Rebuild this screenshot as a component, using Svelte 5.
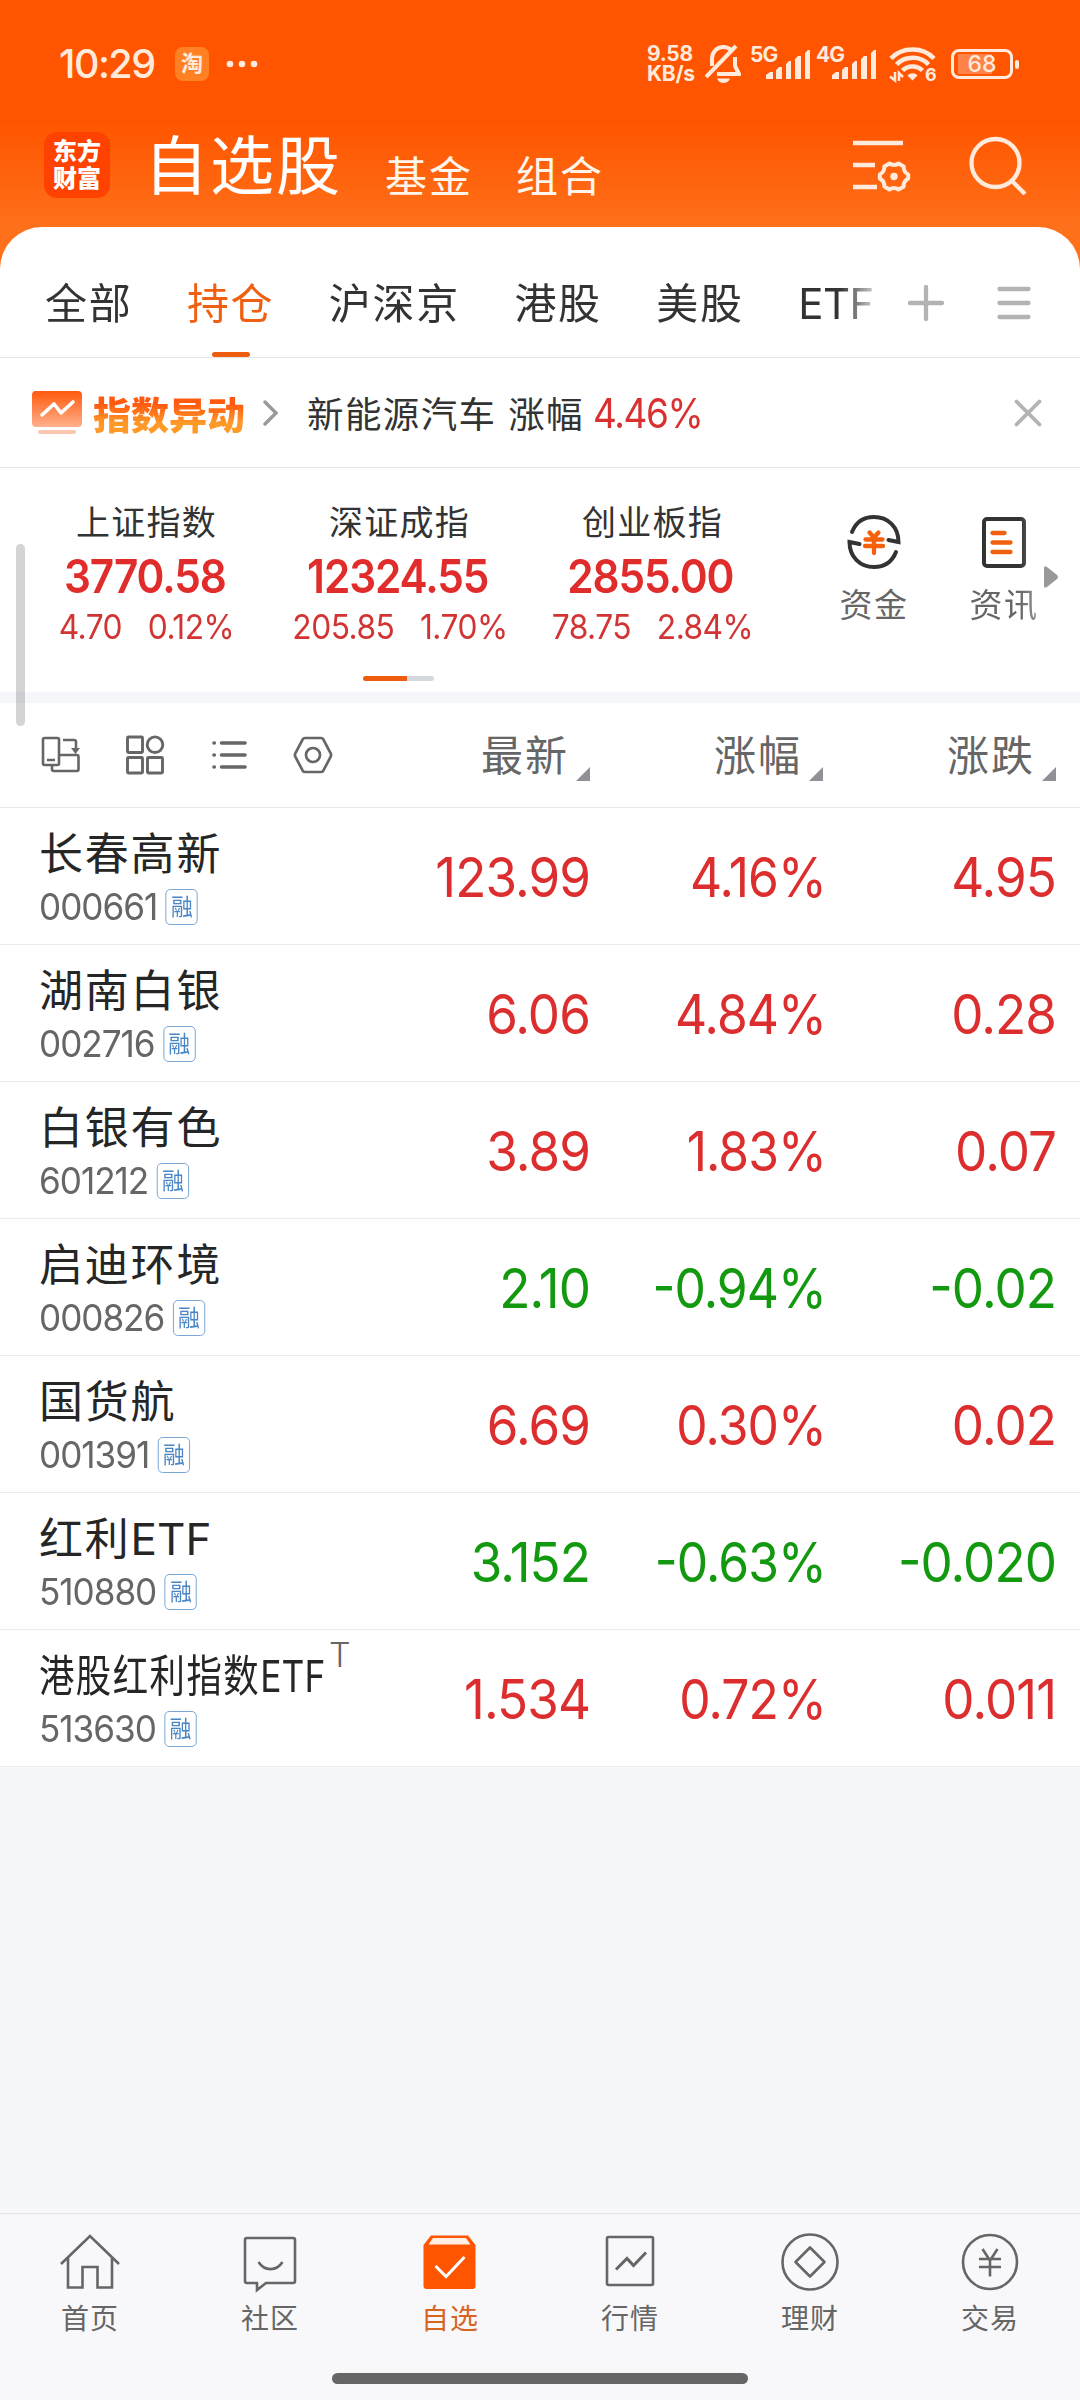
<script lang="ts">
	type Index = { name: string; value: string; change: string; pct: string };
	type Stock = {
		name: string;
		suffix?: string;
		code: string;
		last: string;
		pct: string;
		diff: string;
		down?: boolean;
		long?: boolean;
	};

	const tabs = ['全部', '持仓', '沪深京', '港股', '美股', 'ETF'];
	let activeTab = $state('持仓');

	const indices: Index[] = [
		{ name: '上证指数', value: '3770.58', change: '4.70', pct: '0.12%' },
		{ name: '深证成指', value: '12324.55', change: '205.85', pct: '1.70%' },
		{ name: '创业板指', value: '2855.00', change: '78.75', pct: '2.84%' }
	];

	const columns = ['最新', '涨幅', '涨跌'];

	const stocks: Stock[] = [
		{ name: '长春高新', code: '000661', last: '123.99', pct: '4.16%', diff: '4.95' },
		{ name: '湖南白银', code: '002716', last: '6.06', pct: '4.84%', diff: '0.28' },
		{ name: '白银有色', code: '601212', last: '3.89', pct: '1.83%', diff: '0.07' },
		{ name: '启迪环境', code: '000826', last: '2.10', pct: '-0.94%', diff: '-0.02', down: true },
		{ name: '国货航', code: '001391', last: '6.69', pct: '0.30%', diff: '0.02' },
		{ name: '红利', suffix: 'ETF', code: '510880', last: '3.152', pct: '-0.63%', diff: '-0.020', down: true },
		{ name: '港股红利指数', suffix: 'ETF', code: '513630', last: '1.534', pct: '0.72%', diff: '0.011', long: true }
	];

	const nav = ['首页', '社区', '自选', '行情', '理财', '交易'];
	let activeNav = $state('自选');
</script>

{#snippet signal(label: string)}
	<div class="signal">
		<span>{label}</span>
		<svg width="61" height="34" viewBox="0 0 61 34">
			<path
				d="M16 32v-4l4-3h3v7zM26 32v-9l3-3h3v12zM36 32v-15l3-3h2v18zM45 32v-20l3-3h3v23zM55 32v-26l3-3h2v29z"
				fill="currentColor"
			/>
		</svg>
	</div>
{/snippet}

<div class="app">
	<header>
		<div class="status">
			<span class="time">10:29</span>
			<span class="taobao">淘</span>
			<svg class="dots" width="32" height="8" viewBox="0 0 32 8" fill="currentColor">
				<circle cx="4" cy="4" r="3.3" />
				<circle cx="16" cy="4" r="3.3" />
				<circle cx="28" cy="4" r="3.3" />
			</svg>
			<div class="speed"><span>9.58</span><span>KB/s</span></div>
			<svg class="bell" width="36" height="40" viewBox="0 0 36 40" fill="none" stroke="currentColor" stroke-width="4">
				<path d="M7 22V15C7 8 12 3 18 3c3 0 6 1 8 3M30 13v9l4 8H12" />
				<path d="M1 33 31 2" />
				<path d="M12 34.500h13c-1 3-4 4.500-6.500 4.500s-5.500-1.500-6.500-4.500z" fill="currentColor" stroke="none" />
			</svg>
			{@render signal('5G')}
			{@render signal('4G')}
			<svg class="wifi" width="48" height="36" viewBox="0 0 48 36" fill="none" stroke="currentColor" stroke-width="4.500">
				<path d="M2 12.500c11-12 32-12 43 0" />
				<path d="M7.500 18.500c8.500-9 24-9 32 0" />
				<path d="M13.500 24.500c5-5.500 15-5.500 20 0" />
				<path d="M18.500 29.500c3-3 7.500-3 10 0l-5 5z" fill="currentColor" stroke="none" />
				<path d="M1 30.500l5 4V26M10 35v-8l4 4" stroke-width="2.500" />
				<text x="36" y="35" font-size="18" font-weight="700" fill="currentColor" stroke="none">6</text>
			</svg>
			<div class="battery"><span>68</span></div>
		</div>

		<div class="titlebar">
			<div class="logo"><span>东方</span><span>财富</span></div>
			<span class="title">自选股</span>
			<span class="sub">基金</span>
			<span class="sub">组合</span>
			<svg class="filter" width="58" height="54" viewBox="0 0 58 54" fill="none" stroke="currentColor" stroke-width="4.500">
				<path d="M0 5h50M0 27h22M0 49h24" />
				<path
					d="M36.500 25.500q4.500 3 9 0l5.200 3q-.4 5.400 4.500 8v4q-4.900 2.600-4.500 8l-5.200 3q-4.500-3-9 0l-5.200-3q.4-5.400-4.500-8v-4q4.900-2.600 4.500-8z"
					stroke-width="4"
					stroke-linejoin="round"
				/>
				<circle cx="41" cy="38.500" r="3.700" fill="currentColor" stroke="none" />
			</svg>
			<svg class="search" width="58" height="60" viewBox="0 0 58 60" fill="none" stroke="currentColor" stroke-width="4.300">
				<circle cx="26.500" cy="28" r="24" />
				<path d="M43 46l13 13" />
			</svg>
		</div>
	</header>

	<main>
		<nav class="tabs">
			<div class="tab-list">
				{#each tabs as tab}
					<button class="tab" class:active={tab === activeTab} onclick={() => (activeTab = tab)}>
						{tab}
					</button>
				{/each}
			</div>
			<svg class="add" width="36" height="36" viewBox="0 0 36 36" stroke="#b3b3b3" stroke-width="4.300" stroke-linecap="round">
				<path d="M18 2v32M2 18h32" />
			</svg>
			<svg class="menu" width="34" height="34" viewBox="0 0 34 34" stroke="#b3b3b3" stroke-width="4.300" stroke-linecap="round">
				<path d="M2.500 3h29M2.500 17h29M2.500 31h29" />
			</svg>
		</nav>

		<div class="notice">
			<svg width="50" height="44" viewBox="0 0 50 44">
				<defs>
					<linearGradient id="card" x1="0" y1="0" x2="0" y2="1">
						<stop offset="0" stop-color="#ff5a0c" />
						<stop offset="1" stop-color="#ffb08c" />
					</linearGradient>
				</defs>
				<rect width="50" height="36" rx="4" fill="url(#card)" />
				<path d="M10 24 22 13l7 9 12-11" fill="none" stroke="#fff" stroke-width="3.600" stroke-linecap="round" stroke-linejoin="round" />
				<rect x="6" y="39" width="38" height="4" rx="2" fill="#fbc7b0" />
			</svg>
			<span class="notice-title">指数异动</span>
			<svg class="chev" width="16" height="26" viewBox="0 0 16 26" fill="none" stroke="#999" stroke-width="3.400" stroke-linecap="round">
				<path d="M2 2l11 11L2 24" />
			</svg>
			<span class="notice-text">新能源汽车 涨幅</span>
			<span class="notice-pct">4.46%</span>
			<svg class="close" width="28" height="28" viewBox="0 0 28 28" stroke="#b3b3b3" stroke-width="3.800" stroke-linecap="round">
				<path d="M2.500 2.500l23 23M25.500 2.500l-23 23" />
			</svg>
		</div>

		<section class="indices">
			{#each indices as index}
				<div class="index">
					<span class="index-name">{index.name}</span>
					<span class="index-value">{index.value}</span>
					<span class="index-change"><span>{index.change}</span><span>{index.pct}</span></span>
				</div>
			{/each}
			<div class="shortcut">
				<svg width="56" height="56" viewBox="0 0 56 56" fill="none" stroke="#333" stroke-width="4">
					<path d="M6 18C10 8 18 3 28 3c14 0 24.500 10 24.500 25l-10-2" stroke-linecap="round" />
					<path d="M50 38C46 48 38 53 28 53 14 53 3.500 43 3.500 28l10 2" stroke-linecap="round" />
					<path d="M23.500 18.500 28 23.500l4.500-5M19.500 25.500h17M19 32h18M28 24v15" stroke="#f4600c" stroke-width="4.300" stroke-linecap="round" />
				</svg>
				<span>资金</span>
			</div>
			<div class="shortcut news">
				<svg width="56" height="56" viewBox="0 0 56 56" fill="none" stroke="#333" stroke-width="4">
					<rect x="8" y="5" width="40" height="47" rx="3" />
					<path d="M16.500 19h12M16.500 28.500h18M16.500 38h18" stroke="#f0600f" stroke-width="4.300" stroke-linecap="round" />
				</svg>
				<span>资讯</span>
			</div>
			<svg class="next" width="16" height="24" viewBox="0 0 16 24"><path d="M1 3q0-3 3-1l10 8q2 2 0 4l-10 8q-3 2-3-1z" fill="#999" /></svg>
			<div class="pager"></div>
			<div class="scroll-thumb"></div>
		</section>

		<div class="toolbar">
			<div class="tools">
				<svg width="40" height="40" viewBox="0 0 40 40" fill="none" stroke="#666" stroke-width="2.600">
					<rect x="2" y="3" width="16" height="27" rx="1.500" />
					<path d="M6 25h8M11 31v3q0 2 2 2h23q1.500 0 1.500-2V22q0-2-1.500-2H19M22 5h11q2 0 2 2v8" />
					<path d="M30 13h9l-4.500 6z" fill="#666" stroke="none" />
				</svg>
				<svg width="40" height="40" viewBox="0 0 40 40" fill="none" stroke="#666" stroke-width="2.900">
					<rect x="2.500" y="2" width="15" height="15.500" rx="1" />
					<circle cx="30" cy="9.700" r="7.800" />
					<rect x="2.500" y="22.500" width="15" height="15.500" rx="1" />
					<rect x="22.500" y="22.500" width="15" height="15.500" rx="1" />
				</svg>
				<svg width="40" height="40" viewBox="0 0 40 40" stroke="#666" stroke-width="3.600" stroke-linecap="round">
					<path d="M5 8h.3M12.500 8H36M5 20h.3M12.500 20H36M5 32h.3M12.500 32H36" />
				</svg>
				<svg width="40" height="40" viewBox="0 0 40 40" fill="none" stroke="#666" stroke-width="2.700">
					<path d="M12 3h16q1.500 0 2.300 1.300l7.400 14q.8 1.700 0 3.400l-7.400 14Q29.500 37 28 37H12q-1.500 0-2.300-1.300l-7.400-14q-.8-1.700 0-3.400l7.400-14Q10.500 3 12 3z" />
					<circle cx="20" cy="20" r="7" />
				</svg>
			</div>
			{#each columns as column}
				<div class="column">
					{column}
					<svg width="14" height="14" viewBox="0 0 14 14"><path d="M14 0v14H0z" fill="#909096" /></svg>
				</div>
			{/each}
		</div>

		<ul class="stocks">
			{#each stocks as stock}
				<li class:down={stock.down}>
					<div class="who">
						<div class="name">
							<span class:squeezed={stock.long}>
								{stock.name}{#if stock.suffix}<span class="suffix">{stock.suffix}</span>{/if}
							</span>
							{#if stock.long}<sup>T</sup>{/if}
						</div>
						<div class="code">{stock.code}<span class="tag">融</span></div>
					</div>
					<span class="num">{stock.last}</span>
					<span class="num pct">{stock.pct}</span>
					<span class="num">{stock.diff}</span>
				</li>
			{/each}
		</ul>
	</main>

	<footer>
		<div class="bottom-nav">
			{#each nav as item, i}
				<button class="nav-item" class:active={item === activeNav} onclick={() => (activeNav = item)}>
					<svg width="62" height="62" viewBox="0 0 62 62" fill="none" stroke="currentColor" stroke-width="2.600">
						{#if i === 0}
							<path d="M2 33 31 5l29 28M9 27v29.500h14.500V36h15v20.500H53V27" />
						{:else if i === 1}
							<path d="M8 7h46q2 0 2 2v41q0 2-2 2H27l-9 7v-7H8q-2 0-2-2V9q0-2 2-2zM19.500 31c6 9.500 18 9.500 24 0" />
						{:else if i === 2}
							<path d="M12 4.500h37l7.500 9.500v41q0 3-3 3H7.500q-3 0-3-3V14z" fill="currentColor" stroke="none" />
							<path d="M14 7h33l4.500 6.500h-42z" fill="#fff0e6" stroke="none" />
							<path d="M16.500 35 27 45.500 45.500 26" stroke="#fff" stroke-width="3" />
						{:else if i === 3}
							<rect x="8" y="6" width="46" height="48" rx="1.500" />
							<path d="M17 38.500 28 27.500l6.500 7L47 21.500" stroke-width="3" />
						{:else if i === 4}
							<circle cx="31" cy="31" r="27.500" />
							<path d="M31 16.500 45.500 31 31 45.500 16.500 31z" stroke-linejoin="round" />
						{:else}
							<circle cx="31" cy="31" r="27" />
							<path d="M23.500 18 31 29.500 38.500 18M20 28h22M20 36h22M31 28v17.500" />
						{/if}
					</svg>
					<span>{item}</span>
				</button>
			{/each}
		</div>
		<div class="home-bar"></div>
	</footer>
</div>

<style>
	:global(body) {
		background: #f6f7fa;
	}
	.app {
		display: flex;
		flex-direction: column;
		width: 1080px;
		height: 2400px;
		overflow: hidden;
		font-family: Inter, 'Noto Sans CJK SC', sans-serif;
		color: #333;
		background: linear-gradient(#f50 120px, #ff701a 227px, #ff701a 300px, #f6f7fa 300px);
	}
	svg {
		display: block;
		flex: none;
	}
	button {
		padding: 0;
		border: 0;
		background: none;
		font: inherit;
		color: inherit;
	}

	header {
		height: 227px;
		color: #ffeadc;
	}
	.status {
		display: flex;
		align-items: center;
		height: 128px;
		padding-left: 59px;
	}
	.time {
		width: 116px;
		font-size: 39.500px;
		font-weight: 500;
		letter-spacing: -1.500px;
	}
	.taobao {
		width: 34px;
		height: 34px;
		border-radius: 8px;
		background: #ff8123;
		font-size: 22px;
		font-weight: 700;
		line-height: 33px;
		text-align: center;
	}
	.dots {
		margin-left: 17px;
	}
	.speed {
		display: flex;
		flex-direction: column;
		width: 58px;
		margin-left: 389px;
		font-size: 21px;
		font-weight: 700;
		line-height: 20px;
		letter-spacing: -0.300px;
	}
	.bell {
		margin-right: 9px;
	}
	.signal {
		display: flex;
		width: 66px;
		height: 34px;
	}
	.signal span {
		width: 0;
		font-size: 21px;
		font-weight: 700;
		line-height: 15px;
		letter-spacing: -1px;
	}
	.wifi {
		margin-left: 7px;
		overflow: visible;
	}
	.battery {
		display: flex;
		justify-content: center;
		position: relative;
		width: 62px;
		height: 30px;
		box-sizing: border-box;
		margin-left: 14px;
		border: 3px solid;
		border-radius: 8px;
		background: linear-gradient(90deg, #ff8248 34px, transparent 34px) 4px 2px / 100% 20px no-repeat;
		font-size: 23px;
		font-weight: 500;
		line-height: 25px;
	}
	.battery::after {
		content: '';
		position: absolute;
		right: -9px;
		top: 8px;
		width: 4px;
		height: 9px;
		border-radius: 2px;
		background: currentColor;
	}

	.titlebar {
		display: flex;
		height: 99px;
		padding-left: 44px;
	}
	.logo {
		display: flex;
		flex-direction: column;
		justify-content: center;
		width: 66px;
		height: 66px;
		margin-top: 4px;
		border-radius: 13px;
		background: #ff4200;
		color: #fff;
		font-size: 24px;
		font-weight: 900;
		line-height: 27px;
		text-align: center;
	}
	.title {
		margin: 6px 0 0 34px;
		color: #fff;
		font-size: 64px;
		line-height: 64px;
		letter-spacing: 2px;
	}
	.sub {
		margin: 27px 0 0 43px;
		color: #fff5ea;
		font-size: 42px;
		line-height: 44px;
		letter-spacing: 2px;
	}
	.filter {
		margin: 10px 0 0 auto;
	}
	.search {
		margin: 7px 53px 0 58px;
	}

	main {
		display: flex;
		flex-direction: column;
		border-radius: 42px 42px 0 0;
		background: #fff;
	}
	.tabs {
		display: flex;
		align-items: center;
		height: 130px;
		border-bottom: 1px solid #e4e4e4;
	}
	.tab-list {
		display: flex;
		gap: 54.500px;
		width: 875px;
		height: 130px;
		padding-left: 45px;
		box-sizing: border-box;
		overflow: hidden;
		mask-image: linear-gradient(90deg, #000 840px, transparent 885px);
	}
	.tab {
		flex: none;
		display: flex;
		flex-direction: column;
		align-items: center;
		padding-top: 55px;
		font-size: 42px;
		line-height: 44px;
		letter-spacing: 1.700px;
	}
	.tab:last-child {
		letter-spacing: -0.500px;
	}
	.tab.active {
		color: #f06012;
	}
	.tab.active::after {
		content: '';
		width: 38px;
		height: 5px;
		margin-top: 26px;
		border-radius: 3px;
		background: #ee5c10;
	}
	.add {
		margin: 22px 0 0 33px;
	}
	.menu {
		margin: 22px 0 0 53px;
	}

	.notice {
		display: flex;
		align-items: center;
		height: 109px;
		padding-left: 32px;
		border-bottom: 1px solid #e4e4e4;
	}
	.notice-title {
		width: 169px;
		padding-left: 11px;
		box-sizing: border-box;
		background: linear-gradient(#ff5a10 35%, #ff9a28 70%);
		background-clip: text;
		color: transparent;
		font-size: 38px;
		font-weight: 900;
	}
	.chev {
		margin-left: 12px;
	}
	.notice-text {
		margin-left: 28px;
		font-size: 36.500px;
		letter-spacing: 1.400px;
		white-space: nowrap;
	}
	.notice-pct {
		margin-left: 9px;
		color: #d93030;
		font-size: 41px;
		letter-spacing: -1.500px;
		transform: scaleX(0.9);
		transform-origin: left;
	}
	.close {
		margin: 0 38px 0 auto;
	}

	.indices {
		display: flex;
		position: relative;
		height: 224px;
		padding-left: 20px;
		border-bottom: 11px solid #f6f7fa;
	}
	.index {
		display: flex;
		flex-direction: column;
		align-items: center;
		width: 253px;
		padding-top: 30px;
	}
	.index-name {
		font-size: 34px;
		line-height: 49px;
		letter-spacing: 1.300px;
	}
	.index-value {
		margin-right: 4px;
		color: #e12c2c;
		font-size: 47px;
		font-weight: 600;
		line-height: 57px;
		letter-spacing: -1.200px;
		transform: scaleX(0.9);
	}
	.index-change {
		display: flex;
		gap: 28px;
		color: #d23434;
		font-size: 34.500px;
		line-height: 46px;
		letter-spacing: -0.600px;
		transform: scaleX(0.92);
	}
	.shortcut {
		display: flex;
		flex-direction: column;
		align-items: center;
		gap: 11px;
		width: 130px;
		margin-left: 30px;
		padding-top: 46px;
		color: #666;
		font-size: 33px;
		line-height: 48px;
		letter-spacing: 1.500px;
	}
	.news {
		margin-left: 0;
		mask-image: linear-gradient(90deg, #000 80px, rgb(0 0 0 / 50%) 110px);
	}
	.next {
		position: absolute;
		left: 1043px;
		top: 97px;
	}
	.pager {
		position: absolute;
		left: 363px;
		top: 208px;
		width: 71px;
		height: 5px;
		border-radius: 3px;
		background: linear-gradient(90deg, #ee5c10 44px, #d5d8dc 44px);
	}
	.scroll-thumb {
		position: absolute;
		left: 16px;
		top: 76px;
		z-index: 1;
		width: 9px;
		height: 182px;
		border-radius: 5px;
		background: rgb(0 0 0 / 17%);
	}

	.toolbar {
		display: grid;
		grid-template-columns: 355px 235px 233px 233px;
		align-items: center;
		height: 104px;
		border-bottom: 1px solid #e9e9e9;
	}
	.tools {
		display: flex;
		gap: 44px;
		padding-left: 41px;
	}
	.column {
		display: flex;
		justify-content: flex-end;
		gap: 7px;
		padding-top: 1px;
		color: #666;
		font-size: 42px;
		line-height: 50px;
		letter-spacing: 2px;
	}
	.column svg {
		align-self: flex-end;
	}

	.stocks {
		margin: 0;
		padding: 0;
		list-style: none;
	}
	li {
		display: grid;
		grid-template-columns: 355px 235px 233px 233px;
		height: 136px;
		border-bottom: 1px solid #ebebeb;
	}
	.who {
		padding: 18px 0 0 39px;
	}
	.name {
		display: flex;
		height: 55px;
		color: #262626;
		font-size: 44px;
		line-height: 56px;
		letter-spacing: 1.800px;
		white-space: nowrap;
	}
	.suffix {
		letter-spacing: 0;
	}
	.squeezed {
		width: 285px;
		transform: scaleX(0.805);
		transform-origin: left;
	}
	sup {
		margin-left: 5px;
		color: #666;
		font-size: 34px;
		font-weight: 300;
		line-height: 14px;
		vertical-align: top;
	}
	.code {
		display: flex;
		align-items: center;
		gap: 9px;
		height: 52px;
		color: #666;
		font-size: 37px;
		line-height: 52px;
		letter-spacing: -1.100px;
		transform: scaleX(0.95);
		transform-origin: left;
	}
	.tag {
		width: 32px;
		height: 34px;
		border: 1px solid #76a5d4;
		border-radius: 5px;
		color: #4a86c5;
		font-size: 23px;
		line-height: 34px;
		letter-spacing: 0;
		text-align: center;
	}
	.num {
		color: #dc2e2e;
		font-size: 55px;
		font-feature-settings: 'case';
		line-height: 138px;
		letter-spacing: -1px;
		text-align: right;
		transform: scaleX(0.93);
		transform-origin: right;
	}
	.pct {
		margin-right: -3px;
		transform: scaleX(0.905);
	}
	.down .num {
		color: #13990f;
	}

	footer {
		height: 186px;
		margin-top: auto;
		border-top: 1px solid #e4e4e6;
		background: #f8f8fb;
	}
	.bottom-nav {
		display: grid;
		grid-template-columns: repeat(6, 1fr);
		height: 159px;
	}
	.nav-item {
		display: flex;
		flex-direction: column;
		align-items: center;
		gap: 10px;
		padding-top: 17px;
		color: #666;
		font-size: 28px;
		line-height: 32px;
		letter-spacing: 1px;
	}
	.nav-item.active {
		color: #ff5500;
	}
	.nav-item.active span {
		color: #d9641f;
	}
	.home-bar {
		width: 416px;
		height: 11px;
		margin: 0 auto;
		border-radius: 6px;
		background: #666;
	}
</style>
